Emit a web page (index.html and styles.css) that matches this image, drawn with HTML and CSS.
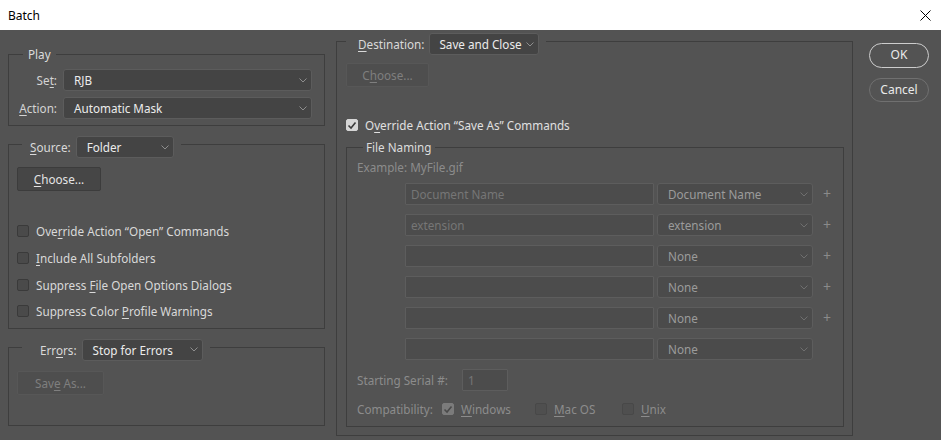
FILE: index.html
```html
<!DOCTYPE html>
<html lang="en">
<head>
<meta charset="utf-8">
<title>Batch</title>
<link rel="stylesheet" href="styles.css">
</head>
<body>
<div class="titlebar">
  <span class="title">Batch</span>
  <svg class="close" width="11" height="11" viewBox="0 0 11 11"><path d="M0.5 0.5 L10.5 10.5 M10.5 0.5 L0.5 10.5" stroke="#000" stroke-width="1" fill="none"/></svg>
</div>
<div class="dialog">
  <div class="col-left">
    <fieldset class="group">
      <legend class="lg-text lg-play">Play</legend>
      <div class="play-grid">
        <span class="lbl">Se<u>t</u>:</span>
        <div class="select sel-wide"><span>RJB</span><svg class="chev" width="8" height="5" viewBox="0 0 8 5"><path d="M0.5 0.5 L4 4 L7.5 0.5" fill="none" stroke="currentColor"/></svg></div>
        <span class="lbl"><u>A</u>ction:</span>
        <div class="select sel-wide"><span>Automatic Mask</span><svg class="chev" width="8" height="5" viewBox="0 0 8 5"><path d="M0.5 0.5 L4 4 L7.5 0.5" fill="none" stroke="currentColor"/></svg></div>
      </div>
    </fieldset>

    <fieldset class="group">
      <legend class="lg-ctl lg-source">
        <span class="lg-inner"><span class="lg-label"><u>S</u>ource:</span>
        <span class="select sel-source"><span>Folder</span><svg class="chev" width="8" height="5" viewBox="0 0 8 5"><path d="M0.5 0.5 L4 4 L7.5 0.5" fill="none" stroke="currentColor"/></svg></span></span>
      </legend>
      <div class="src-body">
        <div class="btn btn-choose"><u>C</u>hoose...</div>
        <div class="cb-list">
          <div class="cbrow"><span class="cb"></span><span>Ove<u>r</u>ride Action “Open” Commands</span></div>
          <div class="cbrow"><span class="cb"></span><span><u>I</u>nclude All Subfolders</span></div>
          <div class="cbrow"><span class="cb"></span><span>Suppress <u>F</u>ile Open Options Dialogs</span></div>
          <div class="cbrow"><span class="cb"></span><span>Suppress Color <u>P</u>rofile Warnings</span></div>
        </div>
      </div>
    </fieldset>

    <fieldset class="group">
      <legend class="lg-ctl lg-errors">
        <span class="lg-inner"><span class="lg-label">Err<u>o</u>rs:</span>
        <span class="select sel-errors"><span>Stop for Errors</span><svg class="chev" width="8" height="5" viewBox="0 0 8 5"><path d="M0.5 0.5 L4 4 L7.5 0.5" fill="none" stroke="currentColor"/></svg></span></span>
      </legend>
      <div class="err-body">
        <div class="btn btn-disabled btn-saveas">Sav<u>e</u> As...</div>
      </div>
    </fieldset>
  </div>

  <div class="col-right">
    <fieldset class="group">
      <legend class="lg-ctl lg-dest">
        <span class="lg-inner"><span class="lg-label"><u>D</u>estination:</span>
        <span class="select sel-dest"><span>Save and Close</span><svg class="chev" width="8" height="5" viewBox="0 0 8 5"><path d="M0.5 0.5 L4 4 L7.5 0.5" fill="none" stroke="currentColor"/></svg></span></span>
      </legend>
      <div class="dest-body">
        <div class="btn btn-disabled btn-choose2">C<u>h</u>oose...</div>
        <div class="cbrow override"><span class="cb on"><svg width="10" height="9" viewBox="0 0 10 9"><path d="M1.5 4.5 L4 7 L8.5 1.5" fill="none" stroke="#3a3a3a" stroke-width="1.6"/></svg></span><span>O<u>v</u>erride Action “Save As” Commands</span></div>

        <fieldset class="group inner">
          <legend class="lg-text lg-fn">File Naming</legend>
          <div class="fn-body">
            <div class="example">Example: MyFile.gif</div>
            <div class="fn-rows">
              <div class="inp">Document Name</div>
              <div class="select sel-dis"><span>Document Name</span><svg class="chev" width="8" height="5" viewBox="0 0 8 5"><path d="M0.5 0.5 L4 4 L7.5 0.5" fill="none" stroke="currentColor"/></svg></div>
              <span class="plus">+</span>

              <div class="inp">extension</div>
              <div class="select sel-dis"><span>extension</span><svg class="chev" width="8" height="5" viewBox="0 0 8 5"><path d="M0.5 0.5 L4 4 L7.5 0.5" fill="none" stroke="currentColor"/></svg></div>
              <span class="plus">+</span>

              <div class="inp"></div>
              <div class="select sel-dis"><span>None</span><svg class="chev" width="8" height="5" viewBox="0 0 8 5"><path d="M0.5 0.5 L4 4 L7.5 0.5" fill="none" stroke="currentColor"/></svg></div>
              <span class="plus">+</span>

              <div class="inp"></div>
              <div class="select sel-dis"><span>None</span><svg class="chev" width="8" height="5" viewBox="0 0 8 5"><path d="M0.5 0.5 L4 4 L7.5 0.5" fill="none" stroke="currentColor"/></svg></div>
              <span class="plus">+</span>

              <div class="inp"></div>
              <div class="select sel-dis"><span>None</span><svg class="chev" width="8" height="5" viewBox="0 0 8 5"><path d="M0.5 0.5 L4 4 L7.5 0.5" fill="none" stroke="currentColor"/></svg></div>
              <span class="plus">+</span>

              <div class="inp"></div>
              <div class="select sel-dis"><span>None</span><svg class="chev" width="8" height="5" viewBox="0 0 8 5"><path d="M0.5 0.5 L4 4 L7.5 0.5" fill="none" stroke="currentColor"/></svg></div>
              <span class="plus"></span>
            </div>
            <div class="serial-row">
              <span class="serial-lbl">Starting Serial #:</span>
              <div class="inp inp-serial">1</div>
            </div>
            <div class="compat-row">
              <span class="compat-lbl">Compatibility:</span>
              <span class="opt opt-win"><span class="cb dis on"><svg width="10" height="9" viewBox="0 0 10 9"><path d="M1.5 4.5 L4 7 L8.5 1.5" fill="none" stroke="#4a4a4a" stroke-width="1.6"/></svg></span><span><u>W</u>indows</span></span>
              <span class="opt opt-mac"><span class="cb dis"></span><span><u>M</u>ac OS</span></span>
              <span class="opt"><span class="cb dis"></span><span><u>U</u>nix</span></span>
            </div>
          </div>
        </fieldset>
      </div>
    </fieldset>
  </div>

  <div class="col-buttons">
    <div class="pill pill-ok">OK</div>
    <div class="pill pill-cancel">Cancel</div>
  </div>
</div>
</body>
</html>
```

FILE: styles.css
```css
* { box-sizing: border-box; }

html, body {
  margin: 0;
  width: 941px;
  height: 440px;
  overflow: hidden;
}

body {
  background: #535353;
  font-family: "Noto Sans", "Open Sans", sans-serif;
  font-size: 11.7px;
  color: #d9d9d9;
}

u { text-decoration: underline; text-underline-offset: 2px; }

.titlebar {
  height: 30px;
  background: #ffffff;
  color: #000;
  display: flex;
  align-items: center;
  justify-content: space-between;
  padding: 0 10px 0 8px;
}
.title { font-size: 12px; }

.dialog {
  display: flex;
  align-items: flex-start;
  padding-left: 8px;
}

.col-left {
  width: 317px;
  margin-top: 16px;
  display: flex;
  flex-direction: column;
  gap: 10px;
}

.col-right {
  width: 517px;
  margin-left: 11px;
  margin-top: 3px;
}

.col-buttons {
  margin-left: 16px;
  margin-top: 13px;
  display: flex;
  flex-direction: column;
  gap: 10px;
}

fieldset.group {
  margin: 0;
  padding: 0;
  border: 1px solid #3e3e3e;
  min-width: 0;
}
fieldset.group.inner { margin-top: 6px; }

legend { padding: 0; }

.lg-text {
  line-height: 16px;
  height: 16px;
  color: #dcdcdc;
}
.lg-play { margin-left: 14px; padding: 0 5px; }
.lg-fn { margin-left: 16px; padding: 0 3px; }

.lg-ctl {
  height: 17px;
}
.lg-inner {
  display: flex;
  align-items: flex-start;
  height: 17px;
  gap: 5px;
}
.lg-label {
  line-height: 22px;
  height: 22px;
  flex: none;
}
.lg-source { margin-left: 13px; padding: 0 7px 0 8px; }
.lg-errors { margin-left: 13px; padding: 0 7px 0 18px; }
.lg-dest { margin-left: 9px; padding: 0 7px 0 12px; }

/* selects */
.select {
  height: 22px;
  flex: none;
  display: flex;
  align-items: center;
  justify-content: space-between;
  padding: 0 4px 0 10px;
  background: #444444;
  border: 1px solid #5c5c5c;
  border-radius: 3px;
  color: #ececec;
  white-space: nowrap;
}
.chev { color: #8e8e8e; flex: none; }
.sel-source { width: 98px; }
.sel-errors { width: 121px; }
.sel-dest { width: 110px; padding-left: 9px; }
.sel-dis {
  background: #4b4b4b;
  border-color: #5d5d5d;
  color: #9b9b9b;
}
.sel-dis .chev { color: #6f6f6f; }

/* play */
.play-grid {
  display: grid;
  grid-template-columns: 48px 1fr;
  column-gap: 6px;
  row-gap: 6px;
  padding: 7px 12px 6px 0;
}
.lbl {
  text-align: right;
  line-height: 22px;
  color: #d4d4d4;
}

/* buttons */
.btn {
  height: 24px;
  line-height: 22px;
  text-align: center;
  background: #464646;
  border: 1px solid #3c3c3c;
  border-radius: 2px;
  color: #e4e4e4;
}
.btn-disabled {
  background: #4e4e4e;
  border-color: #575757;
  color: #7f7f7f;
}
.btn-choose { width: 84px; }
.btn-saveas { width: 87px; }
.btn-choose2 { width: 83px; }

.src-body { padding: 14px 12px 3px 8px; }
.cb-list { margin-top: 27px; }
.cbrow {
  height: 26.67px;
  display: flex;
  align-items: center;
  gap: 7px;
  white-space: nowrap;
}

.cb {
  width: 12px;
  height: 12px;
  flex: none;
  border: 1px solid #3a3a3a;
  background: #4a4a4a;
  border-radius: 2px;
  display: flex;
  align-items: center;
  justify-content: center;
}
.cb.on {
  background: #d6d6d6;
  border-color: #d6d6d6;
}
.cb.dis {
  background: #4f4f4f;
  border-color: #484848;
}
.cb.dis.on {
  background: #7b7b7b;
  border-color: #7b7b7b;
}

.err-body { padding: 15px 0 30px 8px; }

/* right */
.dest-body { padding: 13px 8px 8px 9px; }
.cbrow.override {
  margin-top: 30px;
  height: 16px;
  color: #e0e0e0;
}

.fn-body {
  padding: 4px 0 9px 10px;
  color: #8c8c8c;
}
.example { line-height: 16px; height: 16px; }

.fn-rows {
  margin-top: 8px;
  padding-left: 48px;
  display: grid;
  grid-template-columns: 249px 156px 22px;
  grid-auto-rows: 22px;
  column-gap: 3px;
  row-gap: 9px;
}
.inp {
  height: 22px;
  line-height: 20px;
  padding-left: 5px;
  background: #4c4c4c;
  border: 1px solid #5d5d5d;
  border-radius: 1px;
  color: #767676;
  white-space: nowrap;
}
.plus {
  text-align: center;
  line-height: 22px;
  font-size: 14px;
  color: #8a8a8a;
}

.serial-row {
  margin-top: 9px;
  display: flex;
  align-items: center;
  height: 22px;
}
.serial-lbl { width: 105px; }
.inp-serial { width: 46px; }

.compat-row {
  margin-top: 10px;
  height: 16px;
  display: flex;
  align-items: center;
}
.compat-lbl { width: 85px; }
.opt {
  display: flex;
  align-items: center;
  gap: 7px;
}
.opt-win { width: 93px; }
.opt-mac { width: 87px; }

/* pills */
.pill {
  width: 60px;
  height: 25px;
  border-radius: 13px;
  text-align: center;
  color: #eaeaea;
  font-size: 12px;
}
.pill-ok {
  border: 1.5px solid #cdcdcd;
  line-height: 22px;
}
.pill-cancel {
  height: 24px;
  border: 1px solid #707070;
  line-height: 22px;
}
```
